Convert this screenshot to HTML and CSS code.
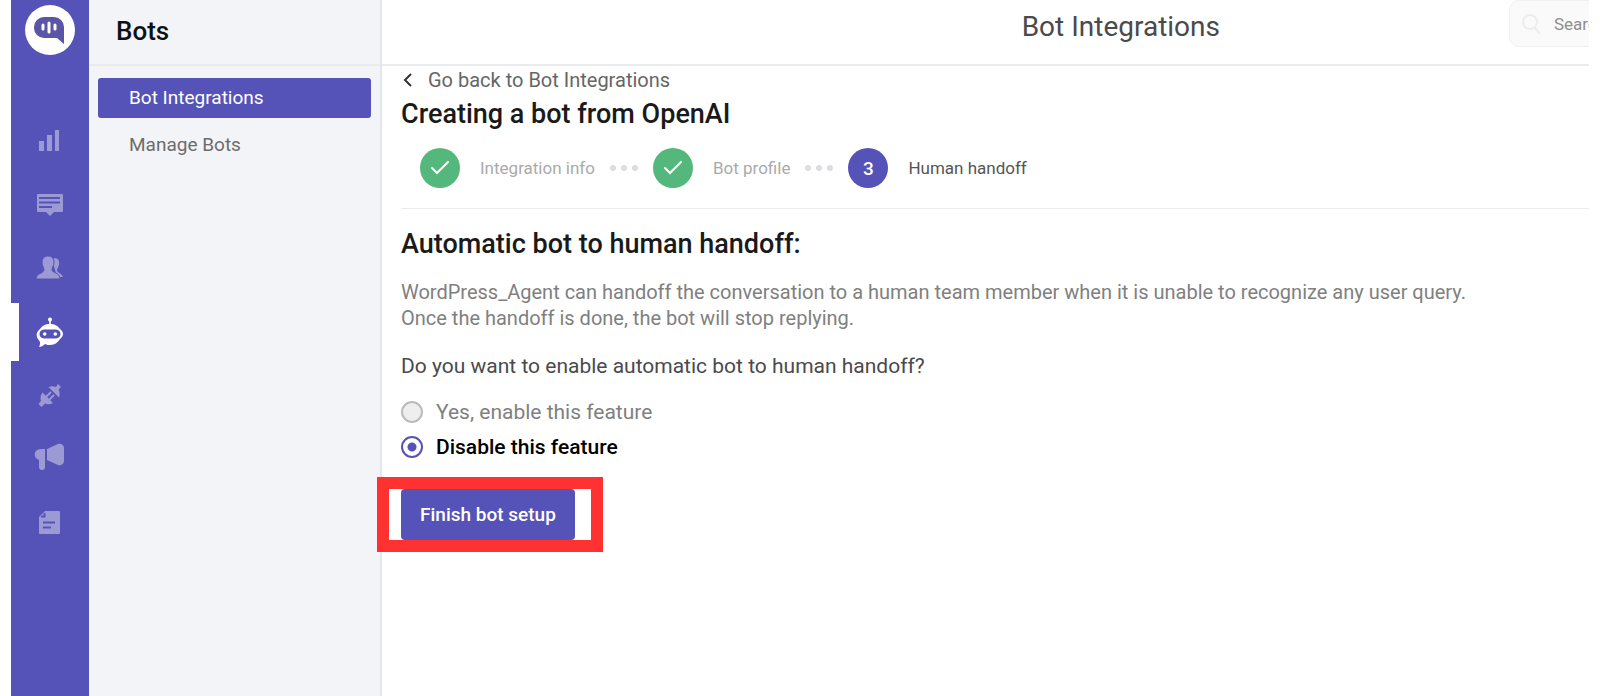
FILE: index.html
```html
<!DOCTYPE html>
<html lang="en">
<head>
    <meta charset="UTF-8">
    <meta name="viewport" content="width=device-width, initial-scale=1.0">
    <link rel="stylesheet" href="styles.css">
    <title>Bot Integrations</title>
</head>
<body>
    <nav class="rail" aria-label="Main">
        <a class="logo" href="#" aria-label="Home">
            <svg width="50" height="50" viewBox="0 0 50 50">
                <circle cx="25" cy="25" r="25" fill="#fff"/>
                <path d="M19 12h10a10 10 0 0 1 10 10v17l-7-6H19a10 10 0 0 1-10-10v-1a10 10 0 0 1 10-10z" fill="#5a55a6"/>
                <path d="M18 20v4M24 18v9M30 20v4" stroke="#fff" stroke-width="3" stroke-linecap="round"/>
            </svg>
        </a>
        <a class="rail-item" href="#" aria-label="Reports">
            <svg width="30" height="30" viewBox="0 0 30 30">
                <path d="M4 16h5v10H4zM12 10h5v16h-5zM20 5h4v21h-4z"/>
            </svg>
        </a>
        <a class="rail-item" href="#" aria-label="Conversations">
            <svg width="30" height="30" viewBox="0 0 30 30">
                <path d="M3 5h24a1 1 0 0 1 1 1v16a1 1 0 0 1-1 1h-8l-4 4-4-4H3a1 1 0 0 1-1-1V6a1 1 0 0 1 1-1z"/>
                <path class="cut" d="M4 9h21M4 13.500h21M4 18h13"/>
            </svg>
        </a>
        <a class="rail-item" href="#" aria-label="Users">
            <svg width="30" height="30" viewBox="0 0 30 30">
                <path d="M17 6c5-2 8 1 7 6-1 3-2 4-2 5 0 3 5 3 6 7h-6z"/>
                <path class="person" d="M13 3c4 0 6 3 6 6 0 4-2 5-2 8 0 3 8 2 8 9H1c0-6 7-5 8-9 0-2-2-4-2-8 0-3 2-6 6-6z"/>
            </svg>
        </a>
        <a class="rail-item active" href="#" aria-label="Bots" aria-current="page">
            <svg width="30" height="30" viewBox="0 0 30 30">
                <circle cx="15" cy="2.500" r="2"/>
                <path d="M14.200 3h1.600v5h-1.600z"/>
                <path fill-rule="evenodd" d="M15 7c5 0 8 2 10 5 4 3 4 7 0 10-2 3-5 6-10 6-2 0-3 0-5-1-2 2-4 3-6 3 1-2 1-3 1-5l-2-3c-2-3-2-7 2-10 2-3 5-5 10-5zM9 12.500c-6 0-6 9 0 9h12c6 0 6-9 0-9z"/>
                <circle cx="9.700" cy="17" r="1.800"/>
                <circle cx="20.300" cy="17" r="1.800"/>
            </svg>
        </a>
        <a class="rail-item" href="#" aria-label="Integrations">
            <svg width="30" height="30" viewBox="0 0 30 30">
                <path d="M23 3l3 3-2.500 2.500c1.500 3 1.500 5 .5 8L13.500 6c3-1 5.500-1 7.500 0zM7.500 11.500L18 22c-3 1.500-5.500 1.500-8 .5L6.500 26l-3-3L6 20c-1-3-.5-6 1.500-8.500z"/>
                <path d="M11 16l5-5M14 19l5-5" stroke="currentColor" stroke-width="1.800"/>
            </svg>
        </a>
        <a class="rail-item" href="#" aria-label="Campaigns">
            <svg width="30" height="30" viewBox="0 0 30 30">
                <path d="M6 4h4v18a3 3 0 0 1-6 0v-7c-6-2-6-11 2-11zM12 4l11-5c3-1 6 1 6 4v13c0 3-3 5-6 4l-11-5z"/>
            </svg>
        </a>
        <a class="rail-item" href="#" aria-label="Resources">
            <svg width="30" height="30" viewBox="0 0 30 30">
                <path d="M10 2h14a1 1 0 0 1 1 1v21a1 1 0 0 1-1 1H5a1 1 0 0 1-1-1V8z"/>
                <path class="cut" d="M6 7.500h3.500V4M8 13.500h12M8 18.500h8"/>
            </svg>
        </a>
    </nav>

    <aside class="sidebar">
        <h2 class="sidebar-title">Bots</h2>
        <nav class="menu" aria-label="Bots">
            <a class="menu-item selected" href="#">Bot Integrations</a>
            <a class="menu-item" href="#">Manage Bots</a>
        </nav>
    </aside>

    <main class="main">
        <header class="topbar">
            <h1 class="topbar-title">Bot Integrations</h1>
            <label class="search">
                <svg width="22" height="24" viewBox="0 0 22 24" aria-hidden="true">
                    <circle cx="9" cy="10" r="7"/>
                    <path d="M14 16l5 6"/>
                </svg>
                <input type="search" placeholder="Search" aria-label="Search">
            </label>
        </header>

        <section class="content">
            <a class="back" href="#">
                <svg width="10" height="14" viewBox="0 0 10 14" aria-hidden="true">
                    <path d="M8 1L2 7l6 6"/>
                </svg>
                Go back to Bot Integrations
            </a>
            <h2 class="heading">Creating a bot from OpenAI</h2>

            <ol class="steps">
                <li class="step done">
                    <span class="badge"><svg width="18" height="14" viewBox="0 0 18 14"><path d="M1 7l5 5L17 1"/></svg></span>
                    Integration info
                </li>
                <li class="dots" aria-hidden="true"><i></i><i></i><i></i></li>
                <li class="step done">
                    <span class="badge"><svg width="18" height="14" viewBox="0 0 18 14"><path d="M1 7l5 5L17 1"/></svg></span>
                    Bot profile
                </li>
                <li class="dots" aria-hidden="true"><i></i><i></i><i></i></li>
                <li class="step current">
                    <span class="badge">3</span>
                    Human handoff
                </li>
            </ol>

            <form class="handoff">
                <h2 class="heading">Automatic bot to human handoff:</h2>
                <p class="description">
                    WordPress_Agent can handoff the conversation to a human team member when it is unable to recognize any user query.<br>
                    Once the handoff is done, the bot will stop replying.
                </p>
                <p class="question">Do you want to enable automatic bot to human handoff?</p>
                <div class="options">
                    <label class="option"><input type="radio" name="handoff" value="enable"> Yes, enable this feature</label>
                    <label class="option"><input type="radio" name="handoff" value="disable" checked> Disable this feature</label>
                </div>
                <div class="finish">
                    <button class="finish-btn" type="button">Finish bot setup</button>
                </div>
            </form>
        </section>
    </main>
</body>
</html>
```
FILE: styles.css
```css
:root {
    --primary: #5553b7;
    --success: #54b77b;
    --highlight: #ff3131;
    --panel: #f3f4f7;
    --line: #e9ebed;
    --line-side: #e2e6ee;
}

* {
    box-sizing: border-box;
}

body {
    font-family: Roboto, 'Liberation Sans', sans-serif;
    font-size: 19px;
    background-color: white;
    display: flex;
    min-height: 100vh;
    margin: 0;
    padding: 0 11px;
}

h1,
h2,
p {
    margin: 0;
}

a {
    text-decoration: none;
}

.rail {
    flex: 0 0 78px;
    display: flex;
    flex-direction: column;
    align-items: center;
    gap: 6px;
    padding-top: 5px;
    background-color: var(--primary);
}

.logo {
    height: 50px;
    margin-bottom: 50px;
}

.rail-item {
    width: 100%;
    height: 58px;
    display: flex;
    align-items: center;
    justify-content: center;
    color: #9c9ad4;
    border: 0 solid transparent;
    border-width: 0 8px;
}

.rail-item.active {
    color: white;
    border-left-color: white;
}

.rail-item svg {
    fill: currentColor;
    overflow: visible;
}

.rail-item .cut {
    fill: none;
    stroke: var(--primary);
    stroke-width: 2;
}

.rail-item .person {
    stroke: var(--primary);
    stroke-width: 1;
}

.sidebar {
    flex: 0 0 293px;
    background-color: var(--panel);
    border-right: 2px solid var(--line-side);
}

.sidebar-title {
    height: 66px;
    padding-left: 27px;
    border-bottom: 2px solid var(--line);
    font-size: 26px;
    font-weight: 500;
    line-height: 62px;
    color: #0b1215;
}

.menu {
    display: flex;
    flex-direction: column;
    gap: 7px;
    padding: 12px 9px;
}

.menu-item {
    padding-left: 31px;
    border-radius: 3px;
    line-height: 40px;
    color: #6c6c6c;
}

.menu-item.selected {
    background-color: var(--primary);
    color: white;
}

.main {
    flex: 1;
    min-width: 0;
}

.topbar {
    height: 66px;
    display: flex;
    align-items: flex-start;
    justify-content: flex-end;
    border-bottom: 2px solid var(--line);
    overflow: hidden;
}

.topbar-title {
    margin-right: 289px;
    font-size: 28px;
    font-weight: 400;
    line-height: 54px;
    color: #4a4a4a;
}

/* runs past the right edge of the bar */
.search {
    flex: 0 0 240px;
    min-width: 0;
    height: 47px;
    display: flex;
    align-items: center;
    gap: 11px;
    margin-right: -160px;
    padding-left: 11px;
    border: 1px solid #f0f0f0;
    border-radius: 10px;
    background-color: #fafafa;
    font-size: 17px;
}

.search svg {
    flex: none;
    fill: none;
    stroke: #ededed;
    stroke-width: 2;
}

.search input {
    flex: 1;
    min-width: 0;
    padding: 0;
    border: none;
    outline: none;
    background: none;
    font: inherit;
}

.search input::placeholder {
    color: #8e8e8e;
}

.content {
    padding-left: 19px;
}

.back {
    display: flex;
    align-items: center;
    gap: 15px;
    padding-left: 2px;
    font-size: 20px;
    line-height: 28px;
    color: #666;
}

.back svg {
    fill: none;
    stroke: #333;
    stroke-width: 2;
}

.heading {
    font-size: 27px;
    font-weight: 500;
    line-height: 40px;
    color: #1a1a1a;
}

.steps {
    display: flex;
    align-items: center;
    gap: 15px;
    margin: 0;
    padding: 14px 0 20px 19px;
    border-bottom: 1px solid var(--line);
    list-style: none;
    font-size: 17px;
}

.step {
    display: flex;
    align-items: center;
    gap: 20px;
    color: #aaa;
}

.step.current {
    color: #555;
}

.badge {
    width: 40px;
    height: 40px;
    display: flex;
    align-items: center;
    justify-content: center;
    border-radius: 50%;
    background-color: var(--primary);
    color: white;
    font-size: 19px;
    font-weight: 500;
}

.done .badge {
    background-color: var(--success);
}

.badge svg {
    fill: none;
    stroke: white;
    stroke-width: 2;
    stroke-linecap: round;
}

.dots {
    display: flex;
    gap: 5px;
}

.dots i {
    width: 6px;
    height: 6px;
    border-radius: 50%;
    background-color: #dcdce0;
}

.handoff {
    padding-top: 15px;
}

.description {
    margin-top: 15px;
    font-size: 20px;
    line-height: 26px;
    color: #808080;
}

.question {
    margin-top: 21px;
    font-size: 21px;
    line-height: 28px;
    color: #4a4a4a;
}

.options {
    display: flex;
    flex-direction: column;
    gap: 7px;
    margin-top: 18px;
}

.option {
    display: flex;
    align-items: center;
    gap: 13px;
    line-height: 28px;
    font-size: 21px;
    color: #808080;
}

.option:has(:checked) {
    font-weight: 500;
    color: black;
}

.option input {
    appearance: none;
    width: 22px;
    height: 22px;
    margin: 0;
    border: 2px solid #bbb;
    border-radius: 50%;
    background-color: #eee;
}

.option input:checked {
    border-color: var(--primary);
    background: radial-gradient(circle, var(--primary) 4px, white 5px);
}

.finish {
    position: relative;
    width: fit-content;
    margin-top: 28px;
}

/* callout frame around the button */
.finish::after {
    content: "";
    position: absolute;
    inset: -12px -28px -12px -24px;
    border: 12px solid var(--highlight);
    pointer-events: none;
}

.finish-btn {
    display: block;
    height: 51px;
    padding: 0 19px;
    border: none;
    border-radius: 4px;
    background-color: var(--primary);
    color: white;
    font: inherit;
    font-weight: 500;
    cursor: pointer;
}
```
